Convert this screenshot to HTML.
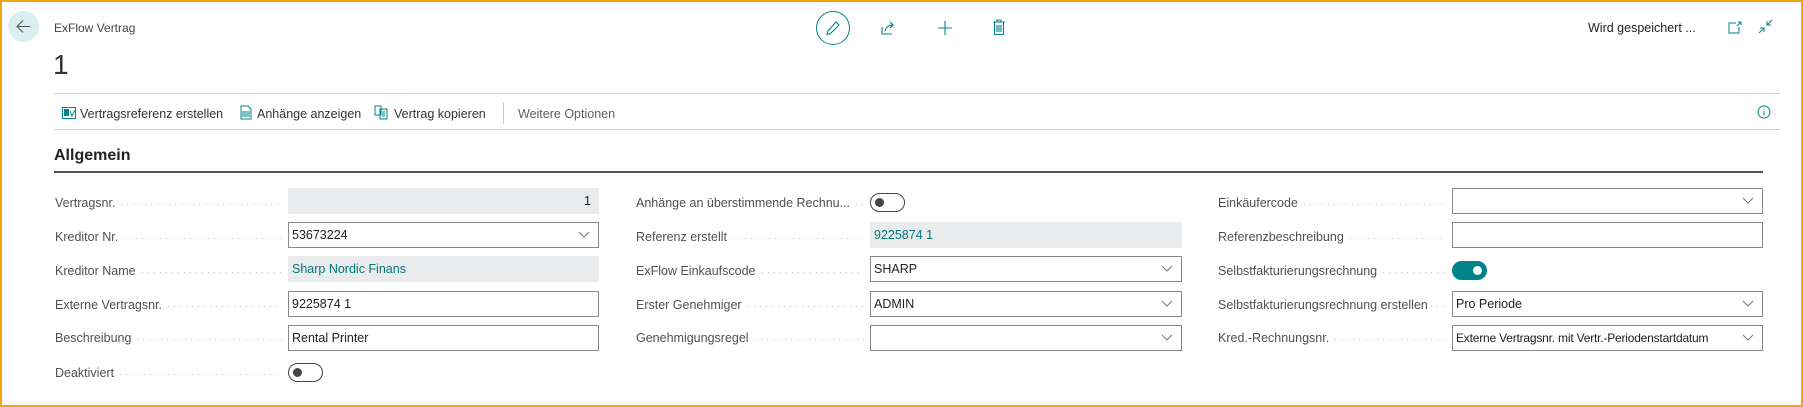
<!DOCTYPE html>
<html><head><meta charset="utf-8"><style>
*{box-sizing:border-box;margin:0;padding:0}
body{width:1803px;height:407px;overflow:hidden;background:#fff;font-family:"Liberation Sans",sans-serif;color:#212121;position:relative}
.frame{position:absolute;left:0;top:0;width:1803px;height:407px;border:2px solid #f2a60c;border-top-width:2px}
.a{position:absolute;white-space:nowrap}
.lbl{position:absolute;font-size:12.5px;color:#505050;height:20px;line-height:20px;display:flex}
.lbl span{padding-right:6px;background:#fff}
.lbl i{flex:1;height:1px;margin-top:11px;margin-right:6px;background-image:linear-gradient(to right,#bdbdbd 1px,transparent 1px);background-size:6px 1px;background-repeat:repeat-x}
.f{position:absolute;height:26px;border:1px solid #8a8886;font-size:12.5px;line-height:24px;padding-left:3px;color:#212121}
.g{position:absolute;height:26px;background:#eaebec;font-size:12.5px;line-height:26px;padding-left:4px;color:#00767c}
.chev{position:absolute;right:8px;top:8px}
.tg{position:absolute;width:35px;height:19px;border:1px solid #444;border-radius:10px}
.tg b{position:absolute;left:4px;top:4px;width:9px;height:9px;border-radius:50%;background:#444}
.tg.on{background:#00838a;border-color:#00838a}
.tg.on b{left:auto;right:4px;background:#fff}
.act{position:absolute;top:105px;font-size:12.5px;line-height:18px;color:#333}
</style></head><body>
<div class="frame"></div>
<div class="a" style="left:8px;top:11px;width:31px;height:31px;border-radius:50%;background:#d9eff1"></div>
<svg class="a" style="left:15px;top:18px" width="17" height="17" viewBox="0 0 17 17"><path d="M15 8.5H2M8 2.5L2 8.5l6 6" fill="none" stroke="#555" stroke-width="1.1"/></svg>
<div class="a" style="left:54px;top:21px;font-size:12px;color:#444">ExFlow Vertrag</div>
<div class="a" style="left:53px;top:49px;font-size:28px;font-weight:300;color:#333">1</div>

<div class="a" style="left:816px;top:11px;width:34px;height:34px;border:1px solid #00838a;border-radius:50%"></div>
<svg class="a" style="left:825px;top:20px" width="16" height="16" viewBox="0 0 16 16"><path d="M11 2l3 3-8.5 8.5L2 14.5l1-3.5z" fill="none" stroke="#00838a" stroke-width="1.1"/></svg>
<svg class="a" style="left:880px;top:20px" width="16" height="16" viewBox="0 0 16 16"><path d="M2 7v7h10M5 11c1-4 4-6 8-6M10 2l3 3-3 3" fill="none" stroke="#00838a" stroke-width="1.1"/></svg>
<svg class="a" style="left:937px;top:20px" width="16" height="16" viewBox="0 0 16 16"><path d="M8 1v14M1 8h14" stroke="#00838a" stroke-width="1.1"/></svg>
<svg class="a" style="left:992px;top:19px" width="14" height="17" viewBox="0 0 14 17"><path d="M1 3h12M5 3V1h4v2M2.5 3.5v12h9v-12M5 6v7M7 6v7M9 6v7" fill="none" stroke="#00838a" stroke-width="1.1"/></svg>
<div class="a" style="left:1588px;top:21px;font-size:12.5px;color:#222">Wird gespeichert ...</div>
<svg class="a" style="left:1728px;top:21px" width="14" height="13" viewBox="0 0 14 13"><path d="M8 2H1v10h10V6M10 1h3v3M13 1l-4 4" fill="none" stroke="#00838a" stroke-width="1"/></svg>
<svg class="a" style="left:1758px;top:19px" width="15" height="15" viewBox="0 0 15 15"><path d="M14 1L9 6M9 2v4h4M1 14l5-5M6 13V9H2" fill="none" stroke="#00838a" stroke-width="1"/></svg>

<div class="a" style="left:54px;top:93px;width:1726px;height:1px;background:#d0d0d4"></div>
<svg class="a" style="left:62px;top:106px" width="15" height="14" viewBox="0 0 15 14"><rect x="0.5" y="1.5" width="13" height="11" fill="none" stroke="#00838a"/><rect x="2" y="3" width="5" height="7" fill="#00838a"/><path d="M8 5l2 5 3-6" stroke="#00838a" fill="none"/></svg>
<div class="act" style="left:80px">Vertragsreferenz erstellen</div>
<svg class="a" style="left:240px;top:105px" width="12" height="15" viewBox="0 0 12 15"><path d="M1 1h7l3 3v10H1z" fill="none" stroke="#00838a"/><path d="M3 6v6M5 6v6M7 6v6M9 6v6" stroke="#00838a"/></svg>
<div class="act" style="left:257px">Anhänge anzeigen</div>
<svg class="a" style="left:374px;top:105px" width="15" height="15" viewBox="0 0 15 15"><path d="M1 1h6v9H1zM6 4h7v10H6z" fill="#fff" stroke="#00838a"/><path d="M8 7h3M8 9h3M8 11h3" stroke="#00838a"/></svg>
<div class="act" style="left:394px">Vertrag kopieren</div>
<div class="a" style="left:503px;top:102px;width:1px;height:22px;background:#c8c8c8"></div>
<div class="act" style="left:518px;color:#606060">Weitere Optionen</div>
<svg class="a" style="left:1757px;top:105px" width="14" height="14" viewBox="0 0 14 14"><circle cx="7" cy="7" r="6" fill="none" stroke="#00838a"/><path d="M7 6v4.5M7 3.5v1.2" stroke="#00838a"/></svg>
<div class="a" style="left:54px;top:129px;width:1726px;height:1px;background:#d0d0d4"></div>

<div class="a" style="left:54px;top:147px;font-size:16px;font-weight:bold;color:#222">Allgemein</div>
<div class="a" style="left:54px;top:171px;width:1709px;height:2px;background:#555"></div>

<!-- col1 -->
<div class="lbl" style="left:55px;top:193px;width:233px"><span>Vertragsnr.</span><i></i></div>
<div class="g" style="left:288px;top:188px;width:311px;text-align:right;padding-right:8px;color:#212121">1</div>
<div class="lbl" style="left:55px;top:227px;width:233px"><span>Kreditor Nr.</span><i></i></div>
<div class="f" style="left:288px;top:222px;width:311px">53673224<svg class="chev" width="12" height="8" viewBox="0 0 12 8"><path d="M1 1l5 5 5-5" fill="none" stroke="#777"/></svg></div>
<div class="lbl" style="left:55px;top:261px;width:233px"><span>Kreditor Name</span><i></i></div>
<div class="g" style="left:288px;top:256px;width:311px">Sharp Nordic Finans</div>
<div class="lbl" style="left:55px;top:295px;width:233px"><span>Externe Vertragsnr.</span><i></i></div>
<div class="f" style="left:288px;top:291px;width:311px">9225874 1</div>
<div class="lbl" style="left:55px;top:328px;width:233px"><span>Beschreibung</span><i></i></div>
<div class="f" style="left:288px;top:325px;width:311px">Rental Printer</div>
<div class="lbl" style="left:55px;top:363px;width:233px"><span>Deaktiviert</span><i></i></div>
<div class="tg" style="left:288px;top:363px"><b></b></div>

<!-- col2 -->
<div class="lbl" style="left:636px;top:193px;width:234px"><span>Anhänge an überstimmende Rechnu...</span><i></i></div>
<div class="tg" style="left:870px;top:193px"><b></b></div>
<div class="lbl" style="left:636px;top:227px;width:234px"><span>Referenz erstellt</span><i></i></div>
<div class="g" style="left:870px;top:222px;width:312px">9225874 1</div>
<div class="lbl" style="left:636px;top:261px;width:234px"><span>ExFlow Einkaufscode</span><i></i></div>
<div class="f" style="left:870px;top:256px;width:312px">SHARP<svg class="chev" width="12" height="8" viewBox="0 0 12 8"><path d="M1 1l5 5 5-5" fill="none" stroke="#777"/></svg></div>
<div class="lbl" style="left:636px;top:295px;width:234px"><span>Erster Genehmiger</span><i></i></div>
<div class="f" style="left:870px;top:291px;width:312px">ADMIN<svg class="chev" width="12" height="8" viewBox="0 0 12 8"><path d="M1 1l5 5 5-5" fill="none" stroke="#777"/></svg></div>
<div class="lbl" style="left:636px;top:328px;width:234px"><span>Genehmigungsregel</span><i></i></div>
<div class="f" style="left:870px;top:325px;width:312px"><svg class="chev" width="12" height="8" viewBox="0 0 12 8"><path d="M1 1l5 5 5-5" fill="none" stroke="#777"/></svg></div>

<!-- col3 -->
<div class="lbl" style="left:1218px;top:193px;width:234px"><span>Einkäufercode</span><i></i></div>
<div class="f" style="left:1452px;top:188px;width:311px"><svg class="chev" width="12" height="8" viewBox="0 0 12 8"><path d="M1 1l5 5 5-5" fill="none" stroke="#777"/></svg></div>
<div class="lbl" style="left:1218px;top:227px;width:234px"><span>Referenzbeschreibung</span><i></i></div>
<div class="f" style="left:1452px;top:222px;width:311px"></div>
<div class="lbl" style="left:1218px;top:261px;width:234px"><span>Selbstfakturierungsrechnung</span><i></i></div>
<div class="tg on" style="left:1452px;top:261px"><b></b></div>
<div class="lbl" style="left:1218px;top:295px;width:234px"><span style="padding-right:3px">Selbstfakturierungsrechnung erstellen</span><i></i></div>
<div class="f" style="left:1452px;top:291px;width:311px">Pro Periode<svg class="chev" width="12" height="8" viewBox="0 0 12 8"><path d="M1 1l5 5 5-5" fill="none" stroke="#777"/></svg></div>
<div class="lbl" style="left:1218px;top:328px;width:234px"><span>Kred.-Rechnungsnr.</span><i></i></div>
<div class="f" style="left:1452px;top:325px;width:311px;font-size:12px;letter-spacing:-0.2px">Externe Vertragsnr. mit Vertr.-Periodenstartdatum<svg class="chev" width="12" height="8" viewBox="0 0 12 8"><path d="M1 1l5 5 5-5" fill="none" stroke="#777"/></svg></div>
</body></html>
